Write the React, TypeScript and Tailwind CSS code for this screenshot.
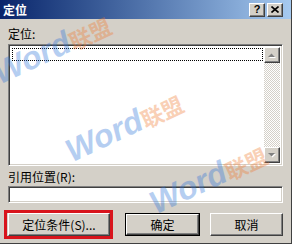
import React from 'react';

const raised =
  'border border-t-white border-l-white border-r-[#404040] border-b-[#404040] shadow-[inset_-1px_-1px_#808080,inset_1px_1px_#d4d0c8] bg-[#d4d0c8]';
const sunken =
  'border border-t-[#808080] border-l-[#808080] border-r-white border-b-white shadow-[inset_1px_1px_#404040,inset_-1px_-1px_#d4d0c8] bg-white';

const ScrollBtn: React.FC<{ down?: boolean }> = ({ down }) => (
  <div className={`w-[16px] h-[16px] flex items-center justify-center ${raised}`}>
    <svg width="8" height="5" viewBox="0 0 8 5">
      {down ? (
        <>
          <path d="M1 1h7L4.5 4.5z" fill="#ffffff" />
          <path d="M0 0h7L3.5 3.5z" fill="#808080" />
        </>
      ) : (
        <>
          <path d="M1 5h7L4.5 1.5z" fill="#ffffff" />
          <path d="M0 4h7L3.5 0.5z" fill="#808080" />
        </>
      )}
    </svg>
  </div>
);

// faint site watermark lying over the dialog
const Watermark: React.FC<{ className: string }> = ({ className }) => (
  <div className={`absolute pointer-events-none select-none origin-bottom-left -rotate-25 opacity-35 flex items-end font-bold italic leading-none text-[32px] ${className}`}>
    <span className="text-[#2f74d8] font-['Liberation_Sans',sans-serif]">Word</span>
    <span className="text-[#f07a30] not-italic font-['Noto_Sans_CJK_SC',sans-serif] text-[22px] mb-[3px]">联盟</span>
  </div>
);

const App: React.FC = () => {
  return (
    <div className="w-[292px] h-[244px] relative overflow-hidden bg-[#d4d0c8] border-r border-b border-[#404040] flex flex-col font-['Noto_Sans_CJK_SC',sans-serif] text-[12px] text-black">
      {/* title bar */}
      <div className="h-[19px] shrink-0 flex items-center pl-[3px] pr-[8px] bg-gradient-to-r from-[#0a246a] to-[#a6caf0]">
        <span className="text-white font-bold leading-none flex-1">定位</span>
        <div className="flex gap-[2px]">
          <div className={`w-[16px] h-[14px] flex items-center justify-center text-[11px] font-bold leading-none font-['Liberation_Sans',sans-serif] ${raised}`}>?</div>
          <div className={`w-[16px] h-[14px] flex items-center justify-center ${raised}`}>
            <svg width="8" height="7" viewBox="0 0 8 7">
              <path d="M0.5 0.5l7 6M7.5 0.5l-7 6" stroke="#000" strokeWidth="1.6" />
            </svg>
          </div>
        </div>
      </div>

      {/* body */}
      <div className="flex-1 flex flex-col pl-[8px] pr-[8px]">
        <div className="mt-[7px] h-[16px] leading-[16px]">定位:</div>
        <div className={`mt-[2px] h-[122px] flex p-[2px] ${sunken}`}>
          <div className="flex-1 pt-[1px] pl-[1px] pr-[1px]">
            <div className="h-[13px] border border-dotted border-black" />
          </div>
          <div className="w-[16px] flex flex-col bg-[image:repeating-conic-gradient(#d4d0c8_0_25%,#ffffff_0_50%)] bg-[length:2px_2px]">
            <ScrollBtn />
            <div className="flex-1" />
            <ScrollBtn down />
          </div>
        </div>
        <div className="mt-[3px] h-[16px] leading-[16px]">引用位置(R):</div>
        <div className={`mt-[1px] h-[17px] ${sunken}`} />
        <div className="mt-[10px] flex items-center">
          <div className="relative">
            <div className={`w-[102px] h-[23px] flex items-center justify-center ${raised}`}>定位条件(S)...</div>
            <div className="absolute -left-[4px] -right-[3px] -top-[3px] -bottom-[3px] border-[3px] border-[#d8141c] pointer-events-none" />
          </div>
          <div className="ml-[15px] border border-black">
            <div className={`w-[73px] h-[21px] flex items-center justify-center ${raised}`}>确定</div>
          </div>
          <div className={`ml-[10px] w-[75px] h-[23px] flex items-center justify-center ${raised}`}>取消</div>
        </div>
      </div>

      <Watermark className="left-[2px] bottom-[154px]" />
      <Watermark className="left-[74px] bottom-[76px]" />
      <Watermark className="left-[158px] bottom-[24px]" />
    </div>
  );
};

export default App;
